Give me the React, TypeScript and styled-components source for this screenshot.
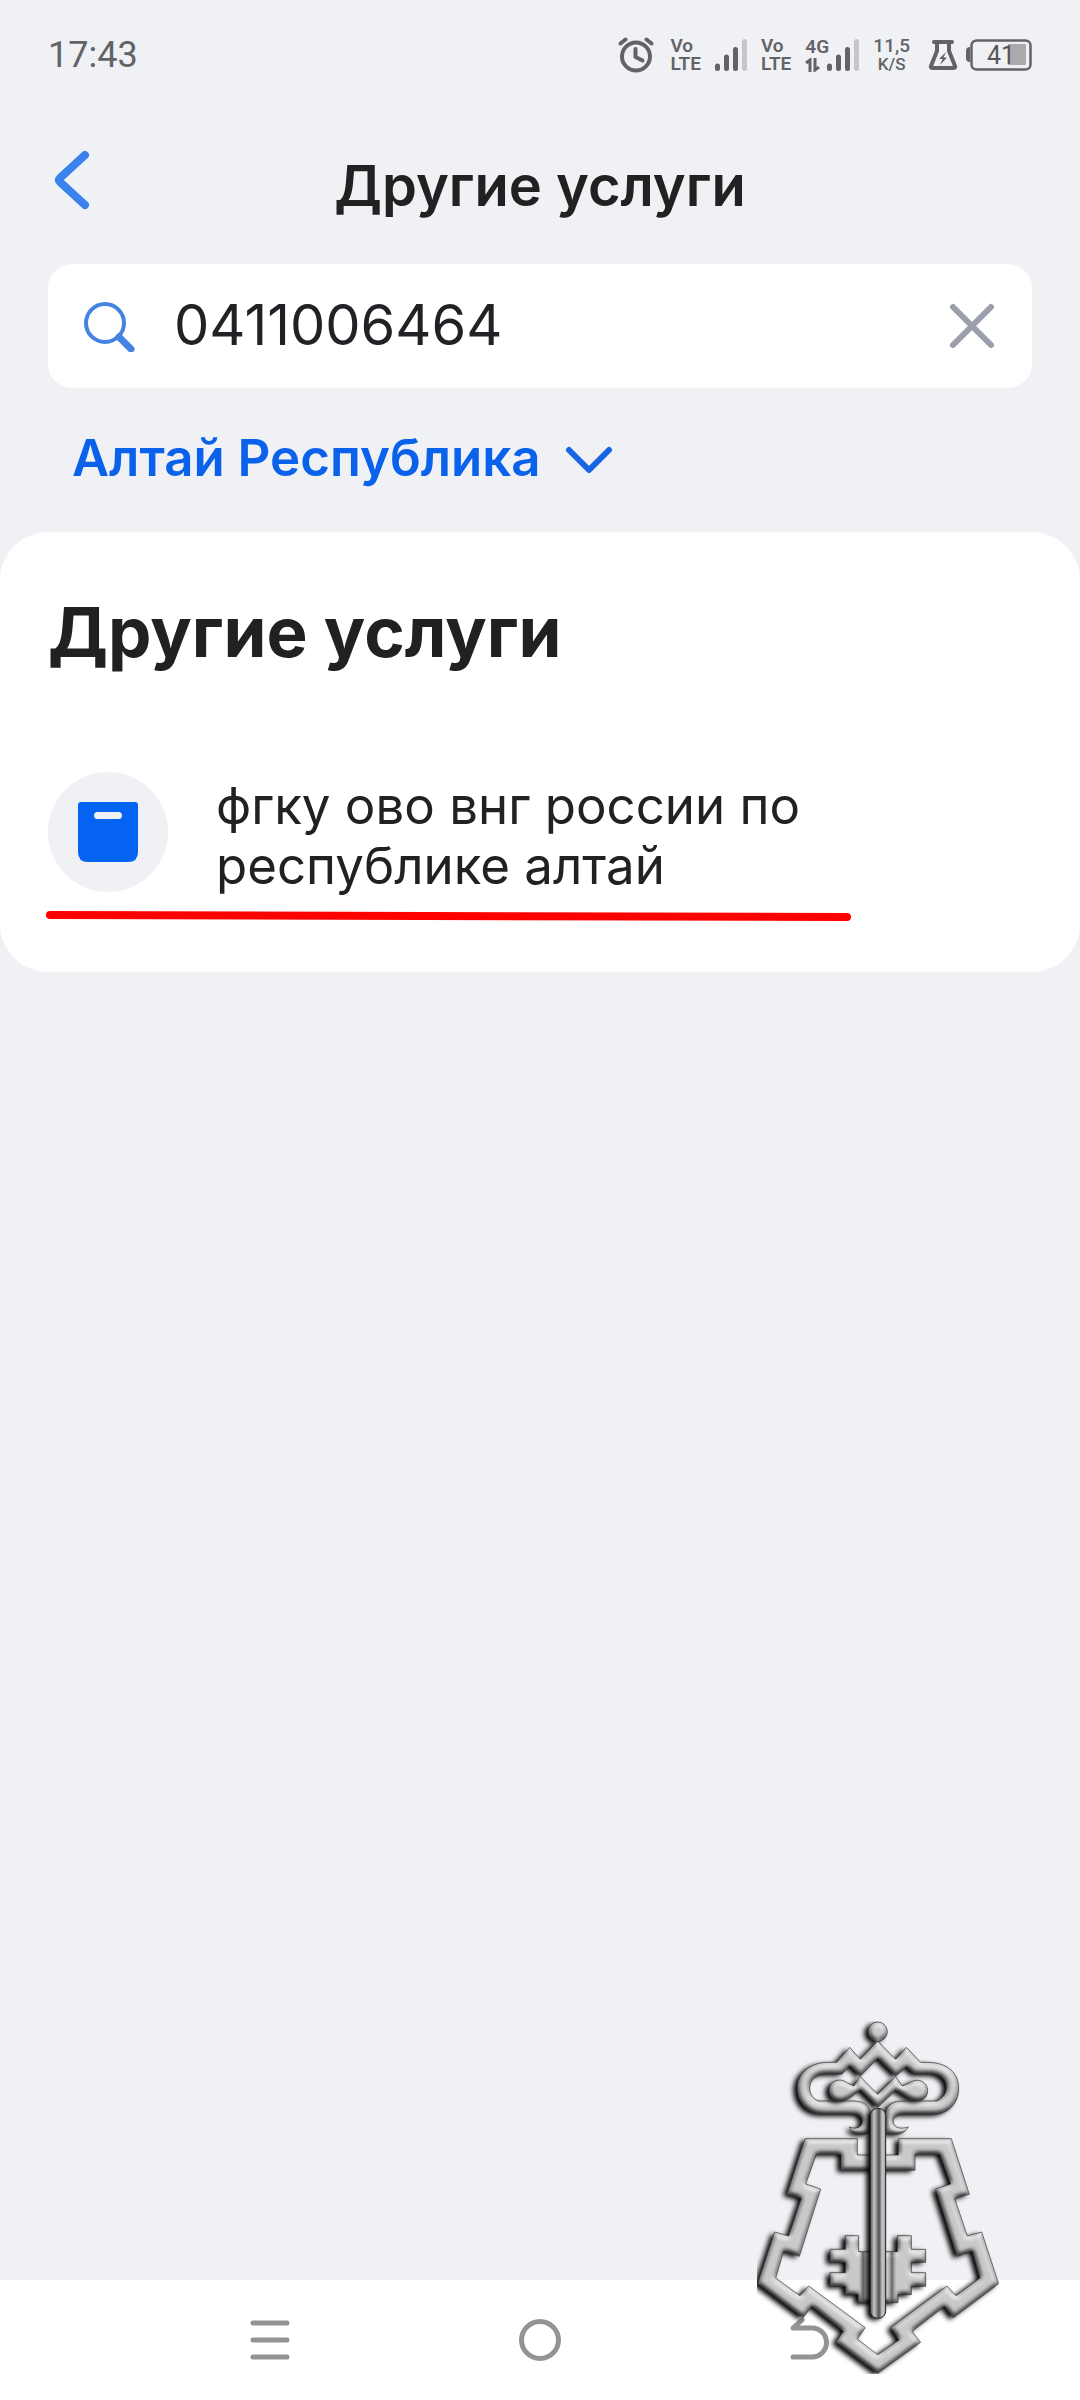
import React, { useState } from 'react'
import styled, { createGlobalStyle } from 'styled-components'

export default function App() {
    const [query, setQuery] = useState('0411006464')

    return (
        <Page>
            <GlobalStyle />
            <StatusBar />
            <Header>
                <BackButton type="button" aria-label="Назад">
                    <svg width="40" height="64" viewBox="0 0 40 64" fill="none">
                        <path
                            d="M33 7 8 30Q6 32 8 34L33 57"
                            stroke="#3b82ec"
                            strokeWidth="8"
                            strokeLinecap="round"
                            strokeLinejoin="round"
                        />
                    </svg>
                </BackButton>
                <HeaderTitle>Другие услуги</HeaderTitle>
            </Header>
            <SearchBox onSubmit={(e) => e.preventDefault()}>
                <SearchIcon />
                <SearchInput
                    type="text"
                    aria-label="Поиск"
                    value={query}
                    onChange={(e) => setQuery(e.target.value)}
                />
                <ClearButton type="button" aria-label="Очистить" onClick={() => setQuery('')}>
                    <svg width="48" height="48" viewBox="0 0 48 48">
                        <path
                            d="M5 5 43 43M43 5 5 43"
                            stroke="#9a9fab"
                            strokeWidth="6"
                            strokeLinecap="round"
                        />
                    </svg>
                </ClearButton>
            </SearchBox>
            <RegionPicker>
                <RegionSelect aria-label="Регион">
                    <option>Алтай Республика</option>
                </RegionSelect>
                <svg width="48" height="32" viewBox="0 0 48 32" fill="none">
                    <path
                        d="M4 6 24 26 44 6"
                        stroke="#1764e4"
                        strokeWidth="6"
                        strokeLinecap="round"
                        strokeLinejoin="round"
                    />
                </svg>
            </RegionPicker>
            <Panel>
                <PanelTitle>Другие услуги</PanelTitle>
                <ServiceLink href="#service">
                    <ServiceIcon>
                        <svg width="60" height="60" viewBox="0 0 60 60">
                            <path
                                d="M3 0H57Q60 0 60 3V50Q60 60 50 60H10Q0 60 0 50V3Q0 0 3 0Z"
                                fill="#0563f2"
                            />
                            <rect x="16" y="10" width="28" height="7" rx="3.5" fill="#eff1f5" />
                        </svg>
                    </ServiceIcon>
                    <ServiceName>фгку ово внг россии по республике алтай</ServiceName>
                </ServiceLink>
                <Underline viewBox="0 0 808 12" aria-hidden="true">
                    <path d="M2 5 799 7" stroke="#ff0000" strokeWidth="8" strokeLinecap="round" />
                </Underline>
            </Panel>
            <NavBar>
                <NavButton type="button" aria-label="Недавние">
                    <svg width="44" height="44" viewBox="0 0 44 44">
                        <path d="M5 5H39M5 22H39M5 39H39" stroke="#949494" strokeWidth="5" strokeLinecap="round" />
                    </svg>
                </NavButton>
                <NavButton type="button" aria-label="Домой">
                    <svg width="44" height="44" viewBox="0 0 44 44" fill="none">
                        <circle cx="22" cy="22" r="18.5" stroke="#949494" strokeWidth="5" />
                    </svg>
                </NavButton>
                <NavButton type="button" aria-label="Назад">
                    <svg width="44" height="44" viewBox="0 0 44 44" fill="none">
                        <path
                            d="M14 2 5 10H24A14.5 14.5 0 0 1 24 39H5"
                            stroke="#949494"
                            strokeWidth="5"
                            strokeLinecap="round"
                            strokeLinejoin="round"
                        />
                    </svg>
                </NavButton>
                <Emblem />
            </NavBar>
        </Page>
    )
}

function StatusBar() {
    return (
        <StatusRow>
            <Clock>17:43</Clock>
            <AlarmIcon
                width="36"
                height="36"
                viewBox="0 0 36 36"
                fill="none"
                stroke="#626366"
                strokeWidth="4"
            >
                <circle cx="18" cy="19.5" r="14" />
                <path d="M17.500 12V20L24.500 23.500" strokeLinecap="round" strokeLinejoin="round" />
                <path d="M2.500 6.500 7.500 2.500M33.500 6.500 28.500 2.500" strokeLinecap="round" />
            </AlarmIcon>
            <StackedLabel>
                <span>Vo</span>
                <span>LTE</span>
            </StackedLabel>
            <SignalBars />
            <StackedLabel>
                <span>Vo</span>
                <span>LTE</span>
            </StackedLabel>
            <MobileNetwork>
                <NetworkType>
                    <span>4G</span>
                    <svg width="16" height="14" viewBox="0 0 16 14" fill="none" stroke="#626366" strokeWidth="3">
                        <path d="M1 5 5 2V14M10 0V12L14 9" />
                    </svg>
                </NetworkType>
                <SignalBars />
            </MobileNetwork>
            <Speed>
                <span>11,5</span>
                <SpeedUnit>K/S</SpeedUnit>
            </Speed>
            <Battery>
                <svg width="30" height="32" viewBox="0 0 30 32" fill="none">
                    <path
                        d="M6 3H24M9 4V12L3 27Q2 29 5 29H25Q28 29 27 27L21 12V4"
                        stroke="#626366"
                        strokeWidth="4"
                        strokeLinecap="round"
                        strokeLinejoin="round"
                    />
                    <path d="M18 13 11 20H14.500L12 26 19 18.500H15.500Z" fill="#626366" />
                </svg>
                <svg width="66" height="32" viewBox="0 0 66 32">
                    <path d="M4 8Q0 8 0 12V19Q0 23 4 23Z" fill="#626366" />
                    <rect x="5.500" y="1.500" width="59" height="29" rx="5" fill="none" stroke="#626366" strokeWidth="2.500" />
                    <rect x="42" y="5" width="18" height="21" rx="1" fill="#aaaaac" />
                    <text x="21" y="25" fontFamily="Roboto, sans-serif" fontSize="25" fill="#555659">
                        41
                    </text>
                </svg>
            </Battery>
        </StatusRow>
    )
}

function SignalBars() {
    return (
        <svg width="32" height="32" viewBox="0 0 32 32" strokeWidth="5" strokeLinecap="round">
            <path d="M2.500 27V29.500M11.500 18V29.500M20.500 10.500V29.500" stroke="#626366" />
            <path d="M29.500 2.500V29.500" stroke="#c5c6c9" />
        </svg>
    )
}

function SearchIcon() {
    return (
        <svg width="52" height="52" viewBox="0 0 52 52" fill="none" stroke="#4483e2">
            <circle cx="21" cy="23" r="19" strokeWidth="4" />
            <path d="M35 37 47 49" strokeWidth="7" strokeLinecap="round" />
        </svg>
    )
}

// fortress outline with a key, lit from the upper right
function Emblem() {
    return (
        <EmblemSvg viewBox="51 63 726 1059" aria-hidden="true">
            <defs>
                <filter
                    id="metal"
                    filterUnits="userSpaceOnUse"
                    x="0"
                    y="0"
                    width="840"
                    height="1200"
                    colorInterpolationFilters="sRGB"
                >
                    <feGaussianBlur in="SourceAlpha" stdDeviation="8" result="height" />
                    <feDiffuseLighting
                        in="height"
                        surfaceScale="11"
                        diffuseConstant="1"
                        lightingColor="#e4e4e4"
                        result="light"
                    >
                        <feDistantLight azimuth="290" elevation="62" />
                    </feDiffuseLighting>
                    <feComposite in="light" in2="SourceAlpha" operator="in" result="lit" />
                    <feGaussianBlur in="SourceAlpha" stdDeviation="8" />
                    <feOffset dx="-11" dy="6" result="shade" />
                    <feMerge>
                        <feMergeNode in="shade" />
                        <feMergeNode in="lit" />
                    </feMerge>
                </filter>
                <linearGradient id="shaft" x1="0" x2="1" y1="0" y2="0">
                    <stop offset="0" stopColor="#555" />
                    <stop offset="0.25" stopColor="#c4c4c4" />
                    <stop offset="0.42" stopColor="#8a8a8a" />
                    <stop offset="0.56" stopColor="#4c4c4c" />
                    <stop offset="0.78" stopColor="#c8c8c8" />
                    <stop offset="1" stopColor="#a2a2a2" />
                </linearGradient>
                <linearGradient id="bit" x1="0" x2="1" y1="0" y2="0">
                    <stop offset="0" stopColor="#8a8a8a" stopOpacity="0" />
                    <stop offset="0.5" stopColor="#4a4a4a" stopOpacity="0.8" />
                    <stop offset="1" stopColor="#8a8a8a" stopOpacity="0" />
                </linearGradient>
                <path
                    id="wall"
                    fillRule="evenodd"
                    d="M352 416H195L141 583 184 595 146 708 104 696 53 851 189 953 215 919 310 994 288 1027 413 1120 542 1027 516 994 613 919 640 953 776 851 725 696 682 708 644 595 688 583 634 416H475V465H352Z
                    M303 511H525V463H599L632 552 587 567 651 769 697 753 720 834 648 887 621 858 452 983 477 1020 413 1064 352 1017 376 983 206 858 180 887 107 834 131 753 178 769 242 567 197 552 229 463H303Z"
                />
                <path
                    id="bow"
                    fillRule="evenodd"
                    d="M413 123 467 178 499 142 542 187H560C625 187 656 220 656 265C656 310 625 343 580 343H490C462 343 452 362 465 377Q476 390 505 381C494 403 463 408 437 398V340C440 313 460 303 490 303H590C610 294 619 280 619 262C619 238 600 222 570 222H522L499 200 467 228 413 175 361 228 329 197 306 222H258C226 222 209 240 209 265C209 282 219 296 235 303H340C370 303 388 315 391 340V398C365 408 336 403 328 381Q350 390 362 377C373 362 365 343 340 343H250C205 343 172 310 172 265C172 220 210 187 265 187H290L329 142 361 178Z"
                />
                <path
                    id="chain"
                    d="M413 283 467 230 487 258 508 249C535 230 563 247 563 272C563 300 535 310 505 295L467 270 413 322 361 270 328 294C298 313 267 300 267 272C267 244 298 230 323 249L341 258 361 230Z"
                />
                <path
                    id="teeth"
                    d="M316 707H356V755H472V707H514V748H557V787H514V818H557V859H514V884H474V908H354V884H316V859H270V818H316V787H270V748H316Z"
                />
            </defs>
            <g filter="url(#metal)">
                <use href="#wall" />
            </g>
            <use href="#wall" fill="none" stroke="#333" strokeWidth="2" />
            <g filter="url(#metal)">
                <use href="#bow" />
                <use href="#teeth" />
                <circle cx="413" cy="95" r="29" />
            </g>
            <g filter="url(#metal)">
                <use href="#chain" />
            </g>
            <g fill="none" stroke="#2a2a2a" strokeWidth="2">
                <use href="#bow" />
                <use href="#chain" />
                <use href="#teeth" />
                <circle cx="413" cy="95" r="29" />
            </g>
            <rect x="356" y="756" width="26" height="151" fill="url(#bit)" />
            <rect x="442" y="756" width="28" height="151" fill="url(#bit)" />
            <g filter="url(#metal)">
                <rect x="391" y="325" width="46" height="630" rx="22" />
            </g>
            <rect
                x="391"
                y="325"
                width="46"
                height="630"
                rx="22"
                fill="url(#shaft)"
                stroke="#222"
                strokeWidth="3"
            />
        </EmblemSvg>
    )
}

const GlobalStyle = createGlobalStyle`
    * {
        box-sizing: border-box;
    }

    body {
        margin: 0;
        background: #f0f1f5;
        color: #212121;
        font-family: Inter, 'Liberation Sans', sans-serif;
    }

    svg {
        display: block;
        flex-shrink: 0;
    }

    button {
        padding: 0;
        border: 0;
        background: none;
    }
`

const Page = styled.div`
    display: flex;
    flex-direction: column;
    min-height: 100vh;
`

const StatusRow = styled.div`
    display: flex;
    align-items: center;
    gap: 14px;
    height: 108px;
    padding: 2px 48px 0;
    color: #626366;
    font-family: Roboto, sans-serif;
`

const Clock = styled.time`
    flex: 1;
    font-size: 36px;
`

const AlarmIcon = styled.svg`
    margin-right: 2px;
`

const StackedLabel = styled.div`
    display: flex;
    flex-direction: column;
    font-size: 19px;
    font-weight: 600;
    line-height: 18px;
`

const MobileNetwork = styled.div`
    display: flex;
    align-items: center;
`

const NetworkType = styled(StackedLabel)`
    gap: 2px;
    width: 22px;
`

const Speed = styled(StackedLabel)`
    align-items: center;
    font-weight: 500;
`

const SpeedUnit = styled.span`
    font-size: 17px;
`

const Battery = styled.div`
    display: flex;
    gap: 8px;
    margin-left: 4px;
`

const Header = styled.header`
    display: grid;
    grid-template-columns: 40px 1fr 40px;
    align-items: center;
    height: 156px;
    padding: 0 52px;
`

const BackButton = styled.button`
    padding-bottom: 12px;
`

const HeaderTitle = styled.h1`
    margin: 0;
    font-size: 56px;
    font-weight: 600;
    line-height: 64px;
    text-align: center;
`

const SearchBox = styled.form`
    display: flex;
    align-items: center;
    gap: 38px;
    height: 124px;
    margin: 0 48px;
    padding: 0 36px;
    border-radius: 24px;
    background: #fff;
`

const SearchInput = styled.input`
    flex: 1;
    min-width: 0;
    padding: 0 0 2px;
    border: 0;
    outline: 0;
    background: none;
    color: #212226;
    font-family: inherit;
    font-size: 56px;
`

const ClearButton = styled.button`
    flex-shrink: 0;
`

const RegionPicker = styled.div`
    display: flex;
    align-items: center;
    gap: 24px;
    height: 144px;
    padding: 0 72px;
`

const RegionSelect = styled.select`
    appearance: none;
    padding: 0 0 6px;
    border: 0;
    background: none;
    color: #0b62ea;
    font-family: inherit;
    font-size: 51px;
    font-weight: 600;
`

const Panel = styled.main`
    padding: 60px 48px 50px;
    border-radius: 48px;
    background: #fff;
`

const PanelTitle = styled.h2`
    margin: 0 0 96px;
    font-size: 69px;
    font-weight: 700;
    line-height: 80px;
`

const ServiceLink = styled.a`
    display: flex;
    align-items: center;
    gap: 48px;
    color: inherit;
    text-decoration: none;
`

const ServiceIcon = styled.span`
    display: flex;
    align-items: center;
    justify-content: center;
    flex-shrink: 0;
    width: 120px;
    height: 120px;
    border-radius: 50%;
    background: #eff1f5;
`

const ServiceName = styled.span`
    max-width: 640px;
    padding-top: 8px;
    font-size: 51px;
    line-height: 60px;
`

const Underline = styled.svg`
    width: 808px;
    max-width: 100%;
    margin-top: 14px;
    overflow: visible;
`

const NavBar = styled.nav`
    position: relative;
    display: grid;
    grid-template-columns: repeat(3, 1fr);
    align-items: center;
    justify-items: center;
    height: 120px;
    margin-top: auto;
    padding: 0 12.5%;
    background: #fff;
`

const NavButton = styled.button`
    width: 44px;
    height: 44px;
`

const EmblemSvg = styled.svg`
    position: absolute;
    right: 81px;
    bottom: 26px;
    width: 242px;
    height: 353px;
    pointer-events: none;
`
